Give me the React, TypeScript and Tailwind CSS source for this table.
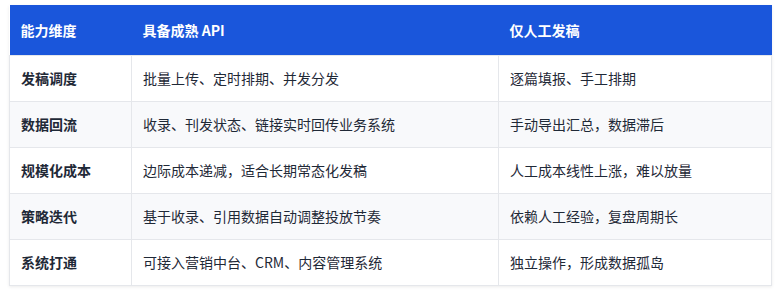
import React from "react";

const rows = [
  ["发稿调度", "批量上传、定时排期、并发分发", "逐篇填报、手工排期"],
  ["数据回流", "收录、刊发状态、链接实时回传业务系统", "手动导出汇总，数据滞后"],
  ["规模化成本", "边际成本递减，适合长期常态化发稿", "人工成本线性上涨，难以放量"],
  ["策略迭代", "基于收录、引用数据自动调整投放节奏", "依赖人工经验，复盘周期长"],
  ["系统打通", "可接入营销中台、CRM、内容管理系统", "独立操作，形成数据孤岛"],
];

export default function App() {
  return (
    <div
      className="w-[776px] h-[296px] bg-white pt-[5px] pl-[9px]"
      style={{ fontFamily: '"Noto Sans CJK SC", "Noto Sans", sans-serif' }}
    >
      <table className="w-[762px] table-fixed border-collapse text-[14px] text-[#1f2937] shadow-[0_1px_3px_rgba(0,0,0,0.08)]">
        <colgroup>
          <col className="w-[122px]" />
          <col className="w-[367px]" />
          <col className="w-[273px]" />
        </colgroup>
        <thead>
          <tr className="bg-[#1a56db] text-white h-[50px]">
            <th className="text-left font-bold px-[11px] leading-[22px]">能力维度</th>
            <th className="text-left font-bold px-[11px] leading-[22px]">具备成熟 API</th>
            <th className="text-left font-bold px-[11px] leading-[22px]">仅人工发稿</th>
          </tr>
        </thead>
        <tbody>
          {rows.map((r, i) => (
            <tr key={i} className={`h-[46px] ${i % 2 === 1 ? "bg-[#f8f9fb]" : "bg-white"}`}>
              <td className="border border-[#e5e7eb] px-[11px] font-bold leading-[22px]">{r[0]}</td>
              <td className="border border-[#e5e7eb] px-[11px] leading-[22px]">{r[1]}</td>
              <td className="border border-[#e5e7eb] px-[11px] leading-[22px]">{r[2]}</td>
            </tr>
          ))}
        </tbody>
      </table>
    </div>
  );
}
